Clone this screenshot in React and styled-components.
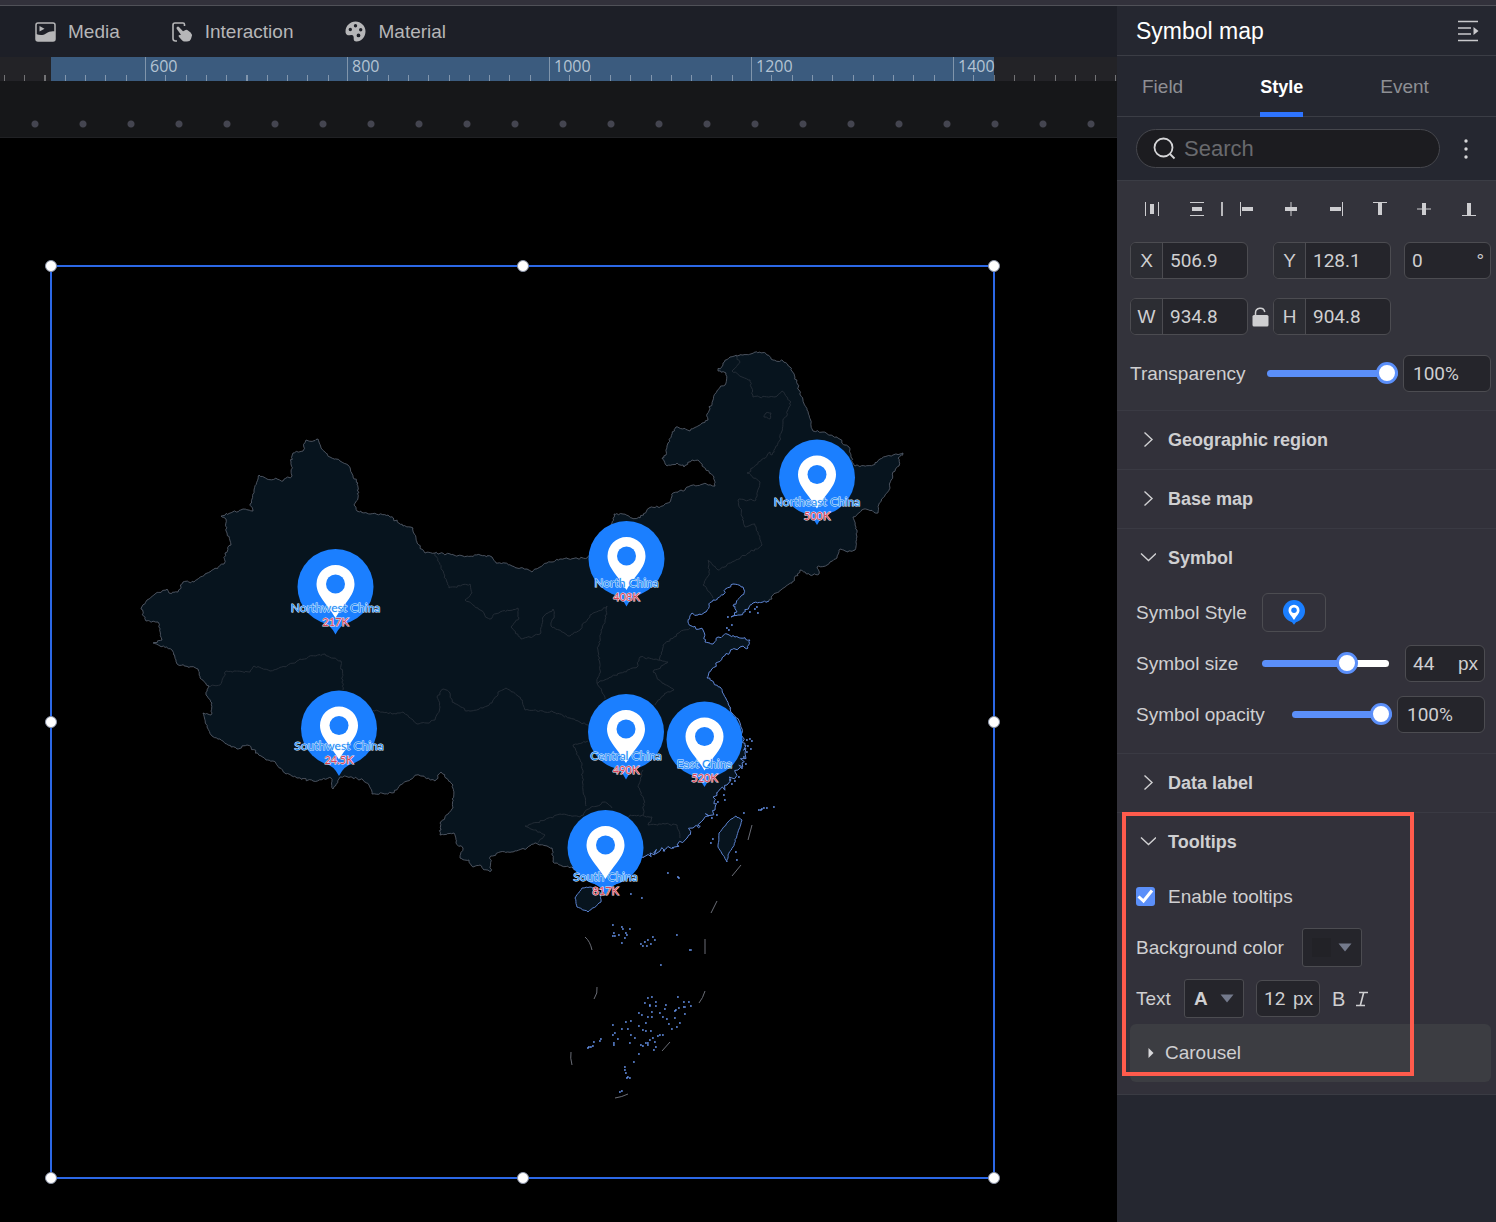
import React, { useState } from 'react';
import styled, { createGlobalStyle, css } from 'styled-components';

const GlobalStyle = createGlobalStyle`
  *, *::before, *::after {
    box-sizing: border-box;
  }
  body {
    margin: 0;
    background: #000;
    color: #cfcfd1;
    font-family: 'Liberation Sans', Arial, sans-serif;
    font-size: 19px;
    line-height: 24px;
  }
  button, input {
    font: inherit;
    color: inherit;
    margin: 0;
    padding: 0;
  }
  button {
    background: none;
    border: 0;
    cursor: pointer;
  }
`;

/* ---------- layout ---------- */

const Page = styled.div`
  display: flex;
  flex-direction: column;
  min-height: 100vh;
`;

const TopStrip = styled.div`
  height: 6px;
  background: #32313b;
  border-bottom: 1px solid #505158;
`;

const Body = styled.div`
  flex: 1;
  display: grid;
  grid-template-columns: minmax(0, 1fr) 379px;
`;

const Workspace = styled.main`
  display: flex;
  flex-direction: column;
  overflow: hidden;
`;

/* ---------- toolbar and ruler ---------- */

const Toolbar = styled.nav`
  display: flex;
  gap: 52px;
  height: 51px;
  padding-left: 35px;
  background: #1d1f27;
`;

const ToolButton = styled.button`
  display: flex;
  align-items: center;
  gap: 12px;
  color: #b6b6b8;
`;

const Ruler = styled.div`
  display: flex;
  height: 24px;
  background: linear-gradient(#3b5b7e, #3b5b7e) 51px 0 / 943px 100% no-repeat #232327;
`;

const RulerTrack = styled.div`
  display: flex;
  margin-left: -57px;
`;

const RulerSegment = styled.div`
  flex: none;
  width: 202px;
  padding-left: 4px;
  border-left: 1px solid #8095ab;
  background: repeating-linear-gradient(90deg, transparent 0 9%, transparent 9% 9.6%, rgba(255, 255, 255, 0.36) 9.6% 10.1%) 0 100% / 100% 6px no-repeat;
  color: #b4c3d3;
  font-family: 'Open Sans', sans-serif;
  font-size: 16px;
  font-weight: 500;
  line-height: 18px;
`;

const GuideBand = styled.div`
  height: 57px;
  border-bottom: 1px solid #202124;
  background: radial-gradient(circle at 24px 43px, #444550 0 3px, transparent 4px) 11px 0 / 48px 100% #161719;
`;

const Stage = styled.div`
  flex: 1;
  padding: 127px 0 43px 50px;
  background: #000;
`;

const Selection = styled.div`
  position: relative;
  width: 945px;
  height: 914px;
  border: 2px solid #2c68e6;
`;

const HandleLayer = styled.div`
  position: absolute;
  inset: -1px;
`;

const Handle = styled.span`
  position: absolute;
  left: ${(props) => props.$x};
  top: ${(props) => props.$y};
  width: 12px;
  height: 12px;
  margin: -6px;
  border: 1px solid #8a93a8;
  border-radius: 50%;
  background: #fff;
`;

const MapDrawing = styled.svg`
  display: block;
  width: 100%;
  height: 100%;
`;

const PinName = styled.text`
  font-family: Lato, sans-serif;
  font-size: 12px;
  text-anchor: middle;
  fill: #1b8cf5;
  stroke: #e2f0ff;
  stroke-width: 1px;
  paint-order: stroke;
`;

const PinValue = styled(PinName)`
  font-size: 11px;
  fill: #d8465c;
  stroke: #fbe9ec;
`;

/* ---------- side panel ---------- */

const Panel = styled.aside`
  background: #252730;
`;

const PanelHeader = styled.header`
  display: flex;
  align-items: center;
  justify-content: space-between;
  height: 50px;
  padding: 0 17px 0 19px;
  border-bottom: 1px solid #3b3d45;
`;

const PanelTitle = styled.h1`
  margin: 0;
  color: #fff;
  font-size: 23px;
  font-weight: 400;
`;

const IconButton = styled.button`
  display: flex;
  align-items: center;
  justify-content: center;
`;

const Tabs = styled.div`
  display: flex;
  gap: 77px;
  height: 61px;
  padding-left: 25px;
  border-bottom: 1px solid #3b3d45;
`;

const Tab = styled.button`
  height: 61px;
  border-top: 5px solid transparent;
  border-bottom: 5px solid transparent;
  color: #8e8f94;
  ${(props) =>
    props.$active &&
    css`
      border-bottom-color: #2e74ff;
      color: #fff;
      font-size: 18px;
      font-weight: 700;
    `}
`;

const SearchRow = styled.div`
  display: flex;
  align-items: center;
  justify-content: space-between;
  height: 64px;
  padding: 0 28px 0 19px;
  border-bottom: 1px solid #3b3d45;
`;

const SearchBox = styled.label`
  display: flex;
  align-items: center;
  gap: 8px;
  width: 304px;
  height: 39px;
  padding: 0 16px;
  border: 1px solid #46474d;
  border-radius: 20px;
  background: #1c1c20;
`;

const SearchInput = styled.input`
  flex: 1;
  min-width: 0;
  border: 0;
  outline: 0;
  background: none;
  font-size: 22px;
  &::placeholder {
    color: #696a6e;
    opacity: 1;
  }
`;

const Properties = styled.div`
  border-bottom: 1px solid #3a3b43;
  background: #32313a;
`;

const Geometry = styled.section`
  padding: 7px 5px 18px 13px;
  background: #33333b;
`;

const AlignRow = styled.div`
  display: flex;
  align-items: center;
  height: 42px;
  margin-bottom: 12px;
`;

const AlignButton = styled(IconButton)`
  flex: 1;
  height: 30px;
`;

const AlignDivider = styled.span`
  width: 2px;
  height: 14px;
  margin: 0 2px;
  background: #b9b9bc;
`;

const FieldGrid = styled.div`
  display: grid;
  grid-template-columns: 118px 25px 118px 1fr;
  row-gap: 19px;
  align-items: center;
  justify-items: center;
`;

const Field = styled.label`
  display: flex;
  width: ${(props) => props.$width || '118px'};
  height: 37px;
  flex: none;
  overflow: hidden;
  border: 1px solid #4c4c51;
  border-radius: 6px;
  background: #25252b;
  line-height: 35px;
  justify-self: end;
`;

const FieldName = styled.span`
  width: 32px;
  border-right: 1px solid #4c4c51;
  background: #2c2d33;
  text-align: center;
`;

const FieldInput = styled.input`
  flex: 1;
  min-width: 0;
  padding-left: ${(props) => props.$inset || '7px'};
  border: 0;
  outline: 0;
  background: none;
  font-family: Roboto, sans-serif;
`;

const Unit = styled.span`
  padding-right: 6px;
`;

const Row = styled.div`
  display: flex;
  align-items: center;
  height: 51px;
`;

const RowLabel = styled.span`
  min-width: ${(props) => props.$min};
`;

const SliderRow = styled(Row)`
  justify-content: space-between;
`;

const TransparencyRow = styled(SliderRow)`
  height: 37px;
  margin-top: 20px;
`;

const SliderGroup = styled.div`
  display: flex;
  align-items: center;
  gap: ${(props) => props.$gap};
`;

const Slider = styled.input`
  appearance: none;
  width: ${(props) => props.$width};
  height: 22px;
  background: none;
  &::-webkit-slider-runnable-track {
    height: 7px;
    border-radius: 4px;
    background: linear-gradient(90deg, #5b8ff9 ${(props) => props.value}%, #fff ${(props) => props.value}%);
  }
  &::-webkit-slider-thumb {
    appearance: none;
    width: 22px;
    height: 22px;
    margin-top: -8px;
    border: 3px solid #5b8ff9;
    border-radius: 50%;
    background: #fff;
  }
`;

const Section = styled.section`
  position: relative;
  border-top: 1px solid #3a3a43;
`;

const SectionHeader = styled.button`
  display: flex;
  align-items: center;
  gap: 12px;
  width: 100%;
  height: 58px;
  padding-left: 22px;
  font-size: 18px;
  font-weight: 700;
`;

const SectionBody = styled.div`
  padding: ${(props) => props.$pad};
`;

const SymbolButton = styled(IconButton)`
  width: 64px;
  height: 39px;
  margin-left: 15px;
  border: 1px solid #4c4c51;
  border-radius: 6px;
`;

const CheckLabel = styled.label`
  display: flex;
  align-items: center;
  gap: 13px;
`;

const CheckWrap = styled.span`
  display: grid;
  width: 19px;
  height: 19px;
  & > * {
    grid-area: 1 / 1;
  }
`;

const CheckBox = styled.input`
  appearance: none;
  border-radius: 3px;
  background: #3f4048;
  &:checked {
    background: #5b8ff9;
  }
`;

const ColorButton = styled.button`
  display: flex;
  align-items: center;
  justify-content: space-between;
  width: 60px;
  height: 39px;
  margin: 0 12px;
  padding: 0 9px;
  border: 1px solid #4c4c51;
  border-radius: 3px;
  background: #25252b;
  font-weight: 700;
`;

const Swatch = styled.span`
  width: 19px;
  height: 19px;
  background: #222227;
`;

const BoldButton = styled.button`
  margin-left: 12px;
  font-size: 20px;
`;

const ItalicButton = styled.button`
  display: flex;
  margin-left: 10px;
`;

const Carousel = styled.button`
  display: flex;
  align-items: center;
  gap: 11px;
  width: 361px;
  height: 58px;
  margin: 0 5px 12px 13px;
  padding-left: 18px;
  border-radius: 6px;
  background: #3c3d42;
`;

const Highlight = styled.div`
  position: absolute;
  left: 5px;
  top: -1px;
  width: 292px;
  height: 264px;
  border: 4px solid #ff5b4c;
  pointer-events: none;
`;

/* ---------- map data ---------- */

const westBorder = [[141,609],[147,600],[155,594],[162,591],[167,589],[169,593],[178,592],[183,582],[194,582],[205,574],[224,564],[225,553],[231,545],[227,533],[226,519],[221,516],[230,513],[243,509],[253,511],[250,504],[254,490],[259,475],[267,479],[277,479],[283,481],[292,476],[291,462],[293,453],[303,451],[306,440],[313,441],[318,439],[321,448],[330,457],[340,461],[348,465],[353,477],[358,483],[358,498],[354,505],[357,511],[370,514],[388,515],[403,526],[413,528],[417,543],[425,553],[435,553],[463,556],[480,555],[492,557],[496,563],[505,563],[517,568],[527,569],[532,572],[547,563],[560,559],[587,558],[600,545],[612,523],[614,514],[623,514],[632,518],[640,518],[649,508],[662,506],[670,502],[673,493],[685,490],[687,487],[703,484],[715,486],[714,477],[705,468],[699,461],[692,460],[684,467],[677,463],[667,466],[662,458],[666,455],[668,443],[676,427],[690,431],[702,423],[708,420],[707,414],[713,400],[717,391],[726,383],[726,373],[718,371],[723,363],[730,357],[743,355],[760,352],[767,355],[773,360],[783,361],[790,367],[795,377],[799,390],[803,400],[807,410],[811,423],[813,431],[823,432],[837,437],[845,445],[849,447],[851,457],[855,466],[873,465],[880,459],[893,455],[903,453],[898,458],[899,466],[893,472],[889,490],[879,504],[878,513],[864,509],[853,517],[857,530],[855,550],[848,552],[840,549],[837,558],[830,562],[827,565],[817,567],[819,574],[810,575],[800,570],[792,583],[773,595],[769,601]];

const coast = [[769,601],[753,603],[740,615],[731,617],[737,612],[733,606],[744,593],[743,587],[733,584],[727,588],[723,595],[713,600],[706,612],[698,615],[692,613],[688,622],[693,627],[703,630],[705,642],[713,644],[718,637],[727,634],[735,637],[750,640],[748,648],[740,647],[730,652],[722,658],[713,668],[707,678],[720,687],[728,703],[732,713],[740,723],[742,733]];

const eastCoast = [[742,733],[745,753],[738,770],[727,785],[713,797],[715,810],[703,820],[693,828],[687,838],[673,847],[660,851],[650,853],[643,857],[620,866],[590,872],[572,867]];

const southBorder = [[572,867],[562,866],[553,862],[552,848],[535,843],[527,848],[513,852],[500,852],[490,857],[491,871],[484,870],[480,865],[473,867],[469,860],[460,858],[463,848],[456,843],[454,833],[440,835],[440,823],[453,808],[453,785],[441,772],[435,781],[417,775],[400,785],[392,793],[372,794],[369,785],[363,780],[350,777],[340,777],[333,789],[331,778],[313,781],[297,778],[285,773],[273,761],[266,760],[247,745],[237,749],[212,736],[207,727],[203,713],[211,715],[212,703],[206,695],[209,686],[200,678],[198,669],[177,664],[172,650],[153,643],[162,640],[158,622],[146,621],[141,609]];

const provinceLines = [
  [[209,686],[220,685],[226,671],[250,672],[254,666],[270,671],[295,663],[300,659],[325,654],[341,661],[343,690]],
  [[373,710],[392,714],[403,712],[417,724],[427,723],[435,720],[440,707],[437,697],[443,689],[450,693],[452,702],[467,711],[483,708],[492,703],[498,692],[506,688],[520,697],[525,710],[553,712],[570,718],[588,725]],
  [[435,553],[442,570],[449,588],[470,584],[472,593],[465,600],[478,608],[489,619],[500,612],[518,608],[519,618],[511,627],[521,639],[540,634],[543,617],[553,609],[554,618],[551,626],[570,636],[580,630],[590,615],[607,606],[605,620],[601,630],[598,650],[600,670],[597,683],[605,699]],
  [[597,683],[620,673],[637,667],[640,657],[658,660],[668,662],[653,672],[662,683],[674,690],[665,693],[655,705]],
  [[660,660],[663,645],[680,632],[690,628]],
  [[588,741],[573,745],[582,765],[583,790],[586,806]],
  [[643,770],[638,787],[644,800],[643,815]],
  [[538,843],[545,835],[525,826],[545,820],[560,814],[580,817],[590,808],[605,802],[612,808]],
  [[625,822],[630,815],[652,817],[648,825],[665,824],[677,825],[680,838]],
  [[737,357],[740,362],[732,371],[742,377],[750,380],[753,397],[775,397],[782,391],[791,402],[783,423],[780,440],[772,455],[770,452],[747,473],[760,482],[756,500],[738,500],[745,527],[755,524],[762,545],[748,553],[718,570],[708,560],[709,575],[703,585],[713,598]],
  [[764,417],[766,413],[771,413],[770,419],[764,417]],
];

const hainan = [[575,898],[582,888],[590,887],[600,892],[601,902],[588,912],[577,907],[575,898]];
const taiwan = [[736,816],[742,820],[738,832],[733,847],[728,855],[727,862],[718,847],[719,833],[728,822],[736,816]];

const seaDashes = 'M752 825L748 840M741 865L732 876M717 901L711 913M585 937Q590 941 592 950M705 939V954M597 987Q598 993 594 999M705 991Q703 998 699 1003M670 1042L662 1051M571 1052Q570 1058 572 1065M615 1098Q622 1097 628 1094';

const islets = [[612,925],[621,927],[622,929],[629,929],[613,933],[614,936],[612,936],[618,935],[625,933],[624,938],[621,943],[626,935],[640,944],[642,946],[644,942],[647,940],[652,937],[654,940],[650,944],[646,946],[676,935],[689,950],[690,950],[660,965],[651,997],[647,998],[644,1003],[655,1002],[649,1005],[649,1006],[655,1006],[638,1013],[641,1015],[647,1017],[651,1017],[651,1012],[645,1023],[638,1026],[642,1030],[645,1031],[650,1031],[665,1005],[664,1009],[659,1013],[662,1017],[666,1019],[668,1024],[674,1011],[675,1010],[674,1018],[671,1029],[676,1027],[679,1023],[677,997],[678,1008],[683,1007],[684,1007],[683,1002],[688,1002],[690,1006],[684,1014],[630,1021],[625,1022],[612,1025],[621,1029],[627,1029],[614,1033],[612,1035],[634,1038],[630,1035],[629,1043],[617,1039],[613,1043],[613,1045],[600,1039],[599,1041],[593,1042],[587,1048],[588,1047],[590,1047],[592,1046],[640,1045],[642,1046],[645,1043],[647,1043],[649,1040],[652,1038],[654,1042],[647,1045],[655,1047],[653,1050],[657,1036],[662,1035],[659,1035],[638,1054],[633,1062],[624,1067],[624,1070],[625,1073],[627,1077],[626,1078],[629,1078],[621,1091],[619,1092],[758,810],[760,810],[761,809],[763,808],[766,808],[773,807],[667,873],[678,878],[677,877],[712,839],[710,843],[735,852],[736,860],[630,894],[641,898],[743,813],[746,740],[749,739],[751,741],[747,746],[750,749],[746,752],[743,757],[745,764],[741,768],[738,777],[734,781],[731,784],[723,795],[724,800],[717,802],[716,815],[711,818],[756,607],[757,613],[749,612],[754,609],[727,617],[726,628],[731,625],[728,630]];

const pins = [
  { name: 'Northwest China', value: '217K', x: 335.5, top: 549, label: 612 },
  { name: 'Southwest China', value: '24.5K', x: 339, top: 690.5, label: 750 },
  { name: 'Northeast China', value: '500K', x: 817, top: 439.5, label: 506 },
  { name: 'North China', value: '408K', x: 626.5, top: 521, label: 587 },
  { name: 'Central China', value: '490K', x: 626, top: 694, label: 760 },
  { name: 'East China', value: '520K', x: 704.5, top: 701.5, label: 768 },
  { name: 'South China', value: '817K', x: 605.5, top: 810, label: 881 },
];

// breaks long straight runs into short uneven steps, always the same way
const jagged = (points, amount) => {
  let seed = 7;
  const next = () => {
    seed = (seed * 16807) % 2147483647;
    return seed / 2147483647 - 0.5;
  };
  const out = [points[0]];
  for (let i = 1; i < points.length; i += 1) {
    const [x0, y0] = points[i - 1];
    const [x1, y1] = points[i];
    const steps = Math.max(1, Math.round(Math.hypot(x1 - x0, y1 - y0) / 2));
    for (let s = 1; s < steps; s += 1) {
      const t = s / steps;
      out.push([x0 + (x1 - x0) * t + next() * amount, y0 + (y1 - y0) * t + next() * amount]);
    }
    out.push([x1, y1]);
  }
  return out;
};

const toPath = (points) => 'M' + points.map(([x, y]) => `${x.toFixed(1)} ${y.toFixed(1)}`).join('L');

const west = jagged(westBorder, 2);
const east = [...jagged(coast, 2.5), ...jagged(eastCoast, 6)];
const south = jagged(southBorder, 2);
const land = toPath([...west, ...east, ...south]);
const isletPath = islets.map(([x, y]) => `M${x} ${y}h1.8`).join('');

/* ---------- drawings ---------- */

const PinShape = () => (
  <>
    <circle cx="0" cy="38" r="38" fill="#1b7fff" />
    <path d="M-17 71Q-5 75 0 85.500Q5 75 17 71Z" fill="#1b7fff" />
    <path d="M0 16A19 19 0 0 0-19 35C-19 47-8 55 0 69C8 55 19 47 19 35A19 19 0 0 0 0 16Z" fill="#fff" />
    <circle cx="0" cy="35" r="9.500" fill="#1b7fff" />
  </>
);

const ChinaMap = () => (
  <MapDrawing viewBox="52 267 941 910">
    <path d={land} fill="#07141e" />
    {provinceLines.map((line, index) => (
      <path key={index} d={toPath(jagged(line, 2))} fill="none" stroke="#232c36" />
    ))}
    <path d={toPath(west)} fill="none" stroke="#5d6472" strokeWidth="0.8" />
    <path d={toPath(south)} fill="none" stroke="#5d6472" strokeWidth="0.8" />
    <path d={toPath(east)} fill="none" stroke="#6087d6" />
    <path d={toPath(jagged(hainan, 1))} fill="#07141e" stroke="#5b82cf" />
    <path d={toPath(jagged(taiwan, 1))} fill="#07141e" stroke="#5b82cf" />
    <path d={seaDashes} fill="none" stroke="#6a6d76" />
    <path d={isletPath} fill="none" stroke="#6592ea" strokeWidth="1.500" />
    {pins.map((pin) => (
      <g key={pin.name}>
        <g transform={`translate(${pin.x} ${pin.top})`}>
          <PinShape />
        </g>
        <PinName x={pin.x} y={pin.label}>{pin.name}</PinName>
        <PinValue x={pin.x} y={pin.label + 14}>{pin.value}</PinValue>
      </g>
    ))}
  </MapDrawing>
);

const MediaIcon = () => (
  <svg width="21" height="20" viewBox="0 0 21 20">
    <rect x="1" y="1" width="19" height="18" rx="2" fill="none" stroke="currentColor" strokeWidth="1.500" />
    <path d="M4.500 4L9.500 6.800L4.500 9.500Z" fill="currentColor" />
    <path d="M1 12C5 13.500 8 13.500 11 11.500C14 9.500 17 9 20 9.500V17.500Q20 19 18.500 19H2.500Q1 19 1 17.500Z" fill="currentColor" />
  </svg>
);

const InteractionIcon = () => (
  <svg width="21" height="20" viewBox="0 0 21 20">
    <path d="M12.500 4V2.500Q12.500 1 11 1H3Q1 1 1 3V16.500Q1 19 3.500 19H5" fill="none" stroke="currentColor" strokeWidth="1.600" />
    <path d="M4.800 5.200Q6 4 7.200 5.200L11 9.300L13.500 8Q15 7.500 16 8.500L18.600 10.500Q20.500 12.500 19.700 14.500L19 17Q18 19.500 15 19.500H12.500Q11 19.500 10 18.300L6.800 14.700Q6 13.300 7.500 13L9 12.800L4.800 7Q4.200 6 4.800 5.200Z" fill="currentColor" />
  </svg>
);

const MaterialIcon = () => (
  <svg width="21" height="21" viewBox="0 0 21 21">
    <path
      fillRule="evenodd"
      fill="currentColor"
      d="M10.500 0.500C16 0.500 20.500 5 20.500 10.300C20.500 16 16.500 20.500 11.500 20.500C9 20.500 8.600 19 8.700 17.300C8.800 15 8.200 13.700 6 14C3.500 14.500 1.500 14.500 0.700 12C-0.500 6 4.500 0.500 10.500 0.500ZM10.500 3A1.700 1.700 0 1 0 10.500 6.400A1.700 1.700 0 1 0 10.500 3ZM5.300 6.800A1.700 1.700 0 1 0 5.300 10.200A1.700 1.700 0 1 0 5.300 6.800ZM15.700 7A1.700 1.700 0 1 0 15.700 10.400A1.700 1.700 0 1 0 15.700 7ZM13.500 12.500A1.900 1.900 0 1 0 13.500 16.300A1.900 1.900 0 1 0 13.500 12.500Z"
    />
  </svg>
);

const CollapseIcon = () => (
  <svg width="22" height="22" viewBox="0 0 22 22" stroke="#c9c9cc" strokeWidth="1.600">
    <path d="M1 1.500H21M1 8H14M1 14H14M1 20.500H21" />
    <path d="M16.500 7L21.500 11L16.500 15Z" fill="#c9c9cc" stroke="none" />
  </svg>
);

const SearchIcon = () => (
  <svg width="23" height="23" viewBox="0 0 23 23" fill="none" stroke="#d6d6d8" strokeWidth="1.800">
    <circle cx="10.500" cy="10.500" r="9" />
    <path d="M17 17L21.500 21.500" />
  </svg>
);

const MoreIcon = () => (
  <svg width="4" height="20" viewBox="0 0 4 20" fill="#d6d6d8">
    <circle cx="2" cy="2" r="1.700" />
    <circle cx="2" cy="10" r="1.700" />
    <circle cx="2" cy="18" r="1.700" />
  </svg>
);

// thin: reference lines, thick: the object bar
const alignIcons = [
  { name: 'Distribute horizontally', thin: 'M1.500 1V15M14.500 1V15', thick: 'M8 3V13' },
  { name: 'Distribute vertically', thin: 'M1 1.500H15M1 14.500H15', thick: 'M3 8H13' },
  { name: 'Align left', thin: 'M1.500 1V15', thick: 'M3 8H14' },
  { name: 'Align center', thin: 'M8 1V15', thick: 'M2 8H14' },
  { name: 'Align right', thin: 'M14.500 1V15', thick: 'M2 8H13' },
  { name: 'Align top', thin: 'M1 1.500H15', thick: 'M8 2V14' },
  { name: 'Align middle', thin: 'M1 8H15', thick: 'M8 2V14' },
  { name: 'Align bottom', thin: 'M1 14.500H15', thick: 'M8 2V14' },
];

const AlignTool = ({ icon }) => (
  <AlignButton aria-label={icon.name}>
    <svg width="16" height="16" viewBox="0 0 16 16" stroke="#cdcdd0">
      <path d={icon.thin} />
      <path d={icon.thick} strokeWidth="4" />
    </svg>
  </AlignButton>
);

const LockIcon = () => (
  <svg width="17" height="20" viewBox="0 0 17 20">
    <rect x="0.500" y="8" width="16" height="11.500" rx="1.500" fill="#cfcfd1" />
    <path d="M3.500 9V6A4.700 4.700 0 0 1 12.800 5" fill="none" stroke="#cfcfd1" strokeWidth="1.500" />
  </svg>
);

const ItalicIcon = () => (
  <svg width="14" height="16" viewBox="0 0 14 16" fill="none" stroke="currentColor" strokeWidth="1.600">
    <path d="M4 1.500H13M1 14.500H10M8.700 1.500L5.300 14.500" />
  </svg>
);

const Chevron = ({ open }) => (
  <svg width="17" height="16" viewBox="0 0 17 16" fill="none" stroke="#d0d0d2" strokeWidth="1.400">
    <path d={open ? 'M2 3.500L9.500 10.500L17 3.500' : 'M5.500 0.500L13 7.500L5.500 14.500'} />
  </svg>
);

const Caret = () => (
  <svg width="14" height="9" viewBox="0 0 14 9">
    <path d="M0.500 0.500H13.500L7 8.500Z" fill="#747a8c" />
  </svg>
);

const CollapsedSection = ({ title }) => (
  <Section>
    <SectionHeader>
      <Chevron />
      {title}
    </SectionHeader>
  </Section>
);

const CoordField = ({ name, value }) => (
  <Field>
    <FieldName>{name}</FieldName>
    <FieldInput defaultValue={value} />
  </Field>
);

const tools = [
  { name: 'Media', Icon: MediaIcon },
  { name: 'Interaction', Icon: InteractionIcon },
  { name: 'Material', Icon: MaterialIcon },
];

const handles = [
  ['0%', '0%'], ['50%', '0%'], ['100%', '0%'],
  ['0%', '50%'], ['100%', '50%'],
  ['0%', '100%'], ['50%', '100%'], ['100%', '100%'],
];

const App = () => {
  const [tab, setTab] = useState('Style');
  const [transparency, setTransparency] = useState(100);
  const [size, setSize] = useState(70);
  const [opacity, setOpacity] = useState(100);

  return (
    <Page>
      <GlobalStyle />
      <TopStrip />
      <Body>
        <Workspace>
          <Toolbar>
            {tools.map(({ name, Icon }) => (
              <ToolButton key={name}>
                <Icon />
                {name}
              </ToolButton>
            ))}
          </Toolbar>
          <Ruler>
            <RulerTrack>
              {['', '600', '800', '1000', '1200', '1400'].map((mark) => (
                <RulerSegment key={mark}>{mark}</RulerSegment>
              ))}
            </RulerTrack>
          </Ruler>
          <GuideBand />
          <Stage>
            <Selection>
              <ChinaMap />
              <HandleLayer>
                {handles.map(([x, y]) => (
                  <Handle key={x + y} $x={x} $y={y} />
                ))}
              </HandleLayer>
            </Selection>
          </Stage>
        </Workspace>

        <Panel>
          <PanelHeader>
            <PanelTitle>Symbol map</PanelTitle>
            <IconButton aria-label="Collapse panel">
              <CollapseIcon />
            </IconButton>
          </PanelHeader>
          <Tabs>
            {['Field', 'Style', 'Event'].map((name) => (
              <Tab key={name} $active={tab === name} onClick={() => setTab(name)}>
                {name}
              </Tab>
            ))}
          </Tabs>
          <SearchRow>
            <SearchBox>
              <SearchIcon />
              <SearchInput placeholder="Search" />
            </SearchBox>
            <IconButton aria-label="More">
              <MoreIcon />
            </IconButton>
          </SearchRow>

          <Properties>
            <Geometry>
              <AlignRow>
                {alignIcons.slice(0, 2).map((icon) => (
                  <AlignTool key={icon.name} icon={icon} />
                ))}
                <AlignDivider />
                {alignIcons.slice(2).map((icon) => (
                  <AlignTool key={icon.name} icon={icon} />
                ))}
              </AlignRow>
              <FieldGrid>
                <CoordField name="X" value="506.9" />
                <span />
                <CoordField name="Y" value="128.1" />
                <Field $width="87px">
                  <FieldInput defaultValue="0" aria-label="Rotation" />
                  <Unit>°</Unit>
                </Field>
                <CoordField name="W" value="934.8" />
                <IconButton aria-label="Lock ratio">
                  <LockIcon />
                </IconButton>
                <CoordField name="H" value="904.8" />
              </FieldGrid>
              <TransparencyRow>
                <label htmlFor="transparency">Transparency</label>
                <SliderGroup $gap="5px">
                  <Slider
                    id="transparency"
                    type="range"
                    $width="131px"
                    value={transparency}
                    onChange={(e) => setTransparency(e.target.value)}
                  />
                  <Field $width="88px">
                    <FieldInput $inset="9px" defaultValue="100%" aria-label="Transparency value" />
                  </Field>
                </SliderGroup>
              </TransparencyRow>
            </Geometry>

            <CollapsedSection title="Geographic region" />
            <CollapsedSection title="Base map" />

            <Section>
              <SectionHeader>
                <Chevron open />
                Symbol
              </SectionHeader>
              <SectionBody $pad="0 11px 13px 19px">
                <Row>
                  Symbol Style
                  <SymbolButton aria-label="Symbol Style">
                    <svg width="22" height="25" viewBox="-38 0 76 86">
                      <PinShape />
                    </svg>
                  </SymbolButton>
                </Row>
                <SliderRow>
                  <label htmlFor="symbol-size">Symbol size</label>
                  <SliderGroup $gap="16px">
                    <Slider
                      id="symbol-size"
                      type="range"
                      $width="127px"
                      value={size}
                      onChange={(e) => setSize(e.target.value)}
                    />
                    <Field $width="80px">
                      <FieldInput defaultValue="44" aria-label="Symbol size value" />
                      <Unit>px</Unit>
                    </Field>
                  </SliderGroup>
                </SliderRow>
                <SliderRow>
                  <label htmlFor="symbol-opacity">Symbol opacity</label>
                  <SliderGroup $gap="5px">
                    <Slider
                      id="symbol-opacity"
                      type="range"
                      $width="100px"
                      value={opacity}
                      onChange={(e) => setOpacity(e.target.value)}
                    />
                    <Field $width="88px">
                      <FieldInput $inset="9px" defaultValue="100%" aria-label="Symbol opacity value" />
                    </Field>
                  </SliderGroup>
                </SliderRow>
              </SectionBody>
            </Section>

            <CollapsedSection title="Data label" />

            <Section>
              <SectionHeader>
                <Chevron open />
                Tooltips
              </SectionHeader>
              <SectionBody $pad="0 11px 0 19px">
                <Row>
                  <CheckLabel>
                    <CheckWrap>
                      <CheckBox type="checkbox" defaultChecked />
                      <svg width="19" height="19" viewBox="0 0 19 19" fill="none" stroke="#fff" strokeWidth="3" pointerEvents="none">
                        <path d="M2.500 9.500L7.500 14L16 3.500" />
                      </svg>
                    </CheckWrap>
                    Enable tooltips
                  </CheckLabel>
                </Row>
                <Row>
                  <RowLabel $min="154px">Background color</RowLabel>
                  <ColorButton aria-label="Background color">
                    <Swatch />
                    <Caret />
                  </ColorButton>
                </Row>
                <Row>
                  <RowLabel $min="36px">Text</RowLabel>
                  <ColorButton aria-label="Text color">
                    A
                    <Caret />
                  </ColorButton>
                  <Field $width="64px">
                    <FieldInput defaultValue="12" aria-label="Text size" />
                    <Unit>px</Unit>
                  </Field>
                  <BoldButton aria-label="Bold">B</BoldButton>
                  <ItalicButton aria-label="Italic">
                    <ItalicIcon />
                  </ItalicButton>
                </Row>
              </SectionBody>
              <Carousel>
                <svg width="6" height="10" viewBox="0 0 6 10">
                  <path d="M0.500 0L5.500 5L0.500 10Z" fill="#d8d8da" />
                </svg>
                Carousel
              </Carousel>
              <Highlight />
            </Section>
          </Properties>
        </Panel>
      </Body>
    </Page>
  );
};

export default App;
